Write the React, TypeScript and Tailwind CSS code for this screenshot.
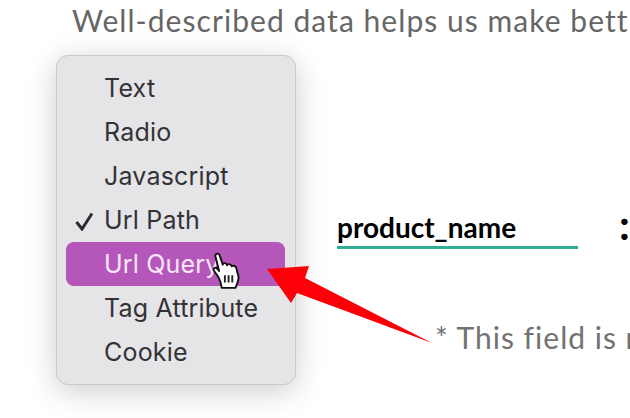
const items = ['Text', 'Radio', 'Javascript', 'Url Path', 'Url Query', 'Tag Attribute', 'Cookie'];

const HandCursor = () => (
  <svg className="absolute left-[210px] top-[252px]" width="34" height="38" viewBox="0 0 32 36">
    <path
      d="M8 24 L3.5 17.5 C2.5 15.5 5 14 6.5 15.5 L8.5 18 L5 4 C4.5 1.5 8 0.5 9 3 L12 12 C12 10 15.5 10 16 12.5 C16.5 11 20 11 20.5 13.5 C21.5 12.5 24.5 13 25 16 L27 24 C27 28 25.5 30 24 34 L11 34 C10.5 30 9.5 27 8 24 Z"
      fill="#ffffff"
      stroke="#111111"
      strokeWidth="1.8"
      strokeLinejoin="round"
    />
    <path d="M14 22 V29 M17.5 22 V29 M21 22 V29" stroke="#222222" strokeWidth="1.8" />
  </svg>
);

const RedArrow = () => (
  <svg className="absolute left-[260px] top-[260px]" width="180" height="90" viewBox="0 0 180 90">
    <path d="M7 9 L49 6 L45 18 L172 83 L37 33 L31 43 Z" fill="#fb0007" />
  </svg>
);

const App = () => {
  return (
    <div className="relative w-[630px] h-[418px] overflow-hidden bg-white font-['Lato',sans-serif]">
      <h1 className="pl-[72px] pt-[2px] h-[55px] whitespace-nowrap text-[30px] leading-[36px] tracking-[1.05px] font-normal text-[#666666]">
        Well-described data helps us make bett
      </h1>
      <div className="flex">
        <div className="ml-[56px] w-[240px] h-[330px] shrink-0 rounded-[12px] border border-[#c9c8ca] bg-[#e5e4e6] pl-[9px] pr-[10px] pt-[10px] shadow-[0_6px_30px_rgba(0,0,0,0.2)] font-['Inter',sans-serif]">
          {items.map(item => (
            <div
              key={item}
              className={`relative h-[44px] rounded-[8px] pl-[38px] text-[25px] leading-[45px] tracking-[0.2px] whitespace-nowrap ${
                item === 'Url Query' ? 'bg-[#b556bb] text-[#f8e8f8]' : 'text-[#333236]'
              }`}
            >
              {item === 'Url Path' && (
                <svg className="absolute left-[9px] top-[14px]" width="19" height="19" viewBox="0 0 19 19">
                  <path d="M1.5 10 L7 17 L17 1.5" fill="none" stroke="#2b2a2e" strokeWidth="3" />
                </svg>
              )}
              {item}
            </div>
          ))}
        </div>
        <div className="flex-1 pl-[41px] pt-[147px] whitespace-nowrap overflow-hidden">
          <div className="flex items-start">
            <div className="w-[241px] h-[47px] border-b-[3px] border-[#2fae93] text-[28px] leading-[50px] font-bold text-black shrink-0">
              product_name
            </div>
            <span className="ml-[41px] text-[42px] leading-[44px] font-bold text-black">:</span>
          </div>
          <p className="pl-[98px] pt-[70px] text-[30px] leading-[36px] tracking-[1px] text-[#727272]">
            * This field is r
          </p>
        </div>
      </div>
      <HandCursor />
      <RedArrow />
    </div>
  );
};

export default App;
